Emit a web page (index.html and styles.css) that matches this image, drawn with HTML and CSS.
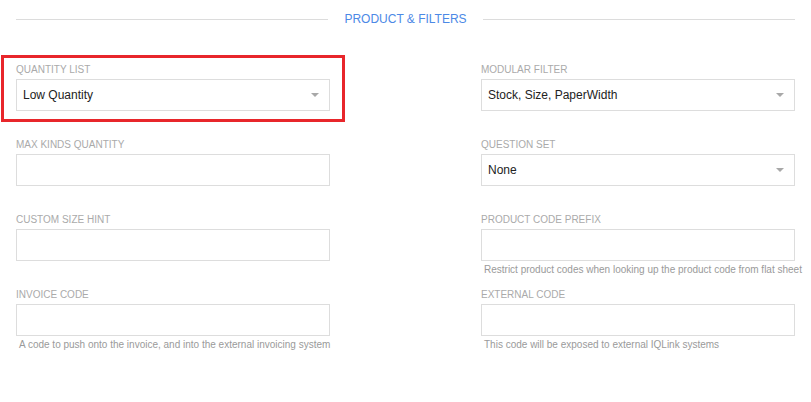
FILE: index.html
```html
<!DOCTYPE html>
<html>
<head>
<meta charset="utf-8">
<link rel="stylesheet" href="styles.css">
</head>
<body>
<div class="page">
  <div class="section-head">
    <span class="rule"></span>
    <span class="section-title">PRODUCT &amp; FILTERS</span>
    <span class="rule"></span>
  </div>
  <div class="form-grid">
    <div class="field highlighted">
      <div class="label">QUANTITY LIST</div>
      <div class="box select">Low Quantity<span class="caret"></span></div>
    </div>
    <div class="field">
      <div class="label">MODULAR FILTER</div>
      <div class="box select">Stock, Size, PaperWidth<span class="caret"></span></div>
    </div>
    <div class="field">
      <div class="label">MAX KINDS QUANTITY</div>
      <div class="box"></div>
    </div>
    <div class="field">
      <div class="label">QUESTION SET</div>
      <div class="box select">None<span class="caret"></span></div>
    </div>
    <div class="field">
      <div class="label">CUSTOM SIZE HINT</div>
      <div class="box"></div>
    </div>
    <div class="field">
      <div class="label">PRODUCT CODE PREFIX</div>
      <div class="box"></div>
      <div class="hint">Restrict product codes when looking up the product code from flat sheet</div>
    </div>
    <div class="field">
      <div class="label">INVOICE CODE</div>
      <div class="box"></div>
      <div class="hint">A code to push onto the invoice, and into the external invoicing system</div>
    </div>
    <div class="field">
      <div class="label">EXTERNAL CODE</div>
      <div class="box"></div>
      <div class="hint">This code will be exposed to external IQLink systems</div>
    </div>
  </div>
</div>
</body>
</html>
```

FILE: styles.css
```css
html, body {
  margin: 0;
  padding: 0;
  background: #ffffff;
}
body {
  font-family: "Liberation Sans", Arial, sans-serif;
  width: 811px;
  height: 402px;
  overflow: hidden;
}
.page {
  padding: 11px 16px 0 16px;
}
.section-head {
  display: flex;
  align-items: center;
  height: 16px;
}
.rule {
  flex: 1;
  height: 1px;
  background: #dcdcdc;
}
.section-title {
  margin: 0 16px;
  font-size: 12px;
  line-height: 16px;
  color: #4c89e6;
  white-space: nowrap;
}
.form-grid {
  margin-top: 37px;
  display: grid;
  grid-template-columns: 314px 314px;
  justify-content: space-between;
  grid-auto-rows: 75px;
}
.field {
  position: relative;
  display: flex;
  flex-direction: column;
}
.label {
  font-size: 10px;
  line-height: 12px;
  color: #aaaaaa;
  margin-bottom: 3px;
}
.box {
  box-sizing: border-box;
  height: 32px;
  border: 1px solid #dddddd;
  padding-left: 6px;
  font-size: 12px;
  line-height: 30px;
  color: #222222;
}
.select {
  display: flex;
  justify-content: space-between;
  align-items: center;
  padding-right: 10px;
}
.caret {
  width: 0;
  height: 0;
  border-left: 4px solid transparent;
  border-right: 4px solid transparent;
  border-top: 4px solid #a8a8a8;
}
.hint {
  margin-top: 2px;
  padding-left: 3px;
  font-size: 10px;
  line-height: 13px;
  color: #9a9a9a;
  white-space: nowrap;
}
.highlighted::before {
  content: "";
  position: absolute;
  top: -9px;
  left: -15px;
  right: -15px;
  height: 61px;
  border: 3px solid #e8262b;
  pointer-events: none;
}
```
